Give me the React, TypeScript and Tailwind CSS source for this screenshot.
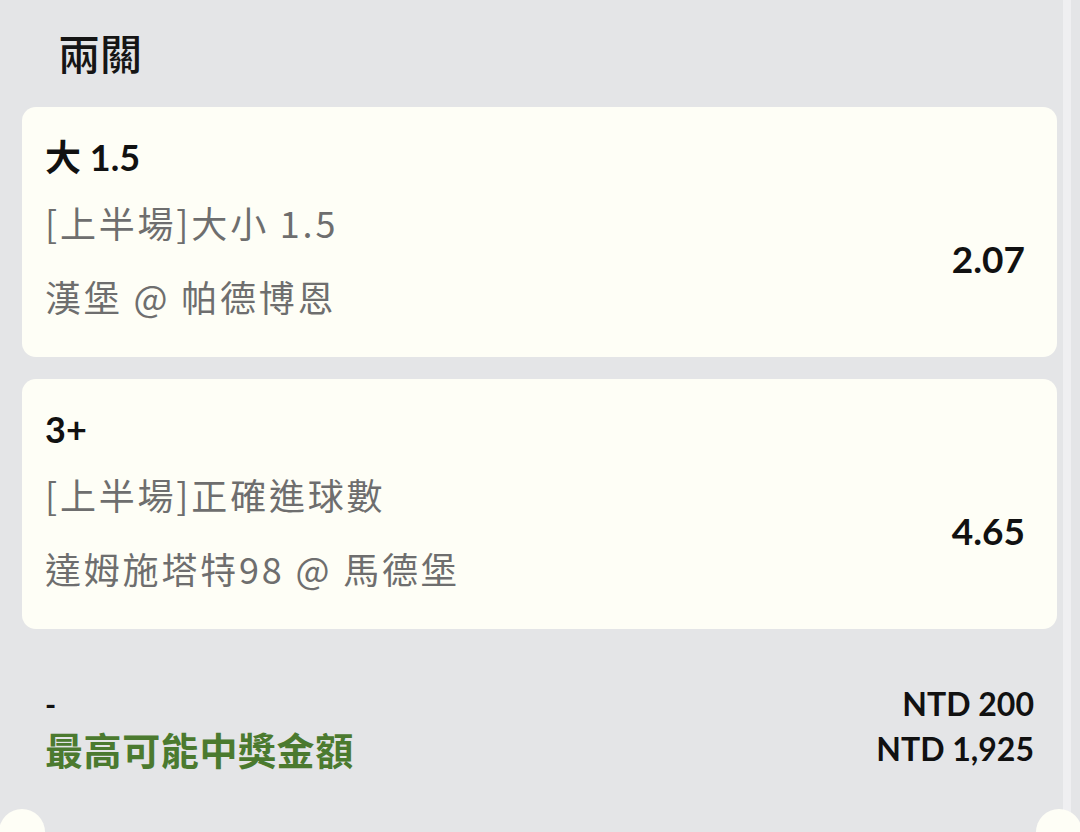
import React from "react";

type Leg = {
  pick: string;
  market: string;
  match: string;
  odds: string;
};

const legs: Leg[] = [
  { pick: "大 1.5", market: "[上半場]大小 1.5", match: "漢堡 @ 帕德博恩", odds: "2.07" },
  { pick: "3+", market: "[上半場]正確進球數", match: "達姆施塔特98 @ 馬德堡", odds: "4.65" },
];

const lato = "font-['Lato','Noto_Sans_CJK_TC',sans-serif]";
const cjk = "font-['Noto_Sans_CJK_TC','Noto_Sans',sans-serif]";

function LegCard({ leg }: { leg: Leg }) {
  return (
    <div className="rounded-[14px] bg-[#fefef6] pl-[23px] pr-[32px] pt-[30px] pb-[39px]">
      <div className={`${lato} text-[36px] leading-[40px] font-bold text-[#111]`}>{leg.pick}</div>
      <div className="mt-[23px] flex items-center justify-between">
        <div className={`${cjk} text-[36px] tracking-[2.8px] text-[#6e6e6e]`}>
          <div className="leading-[44px]">{leg.market}</div>
          <div className="mt-[30px] leading-[44px]">{leg.match}</div>
        </div>
        <div className={`${lato} text-[37px] font-bold text-[#111]`}>{leg.odds}</div>
      </div>
    </div>
  );
}

export default function App() {
  return (
    <div className="relative flex h-[832px] w-[1080px] overflow-hidden bg-[#e4e5e7]">
      <div className="w-[1063px] shrink-0">
        <div className={`${cjk} pl-[58px] pt-[26px] text-[42px] font-medium leading-[52px] text-[#151515]`}>兩關</div>
        <div className="mt-[29px] flex flex-col gap-[22px] pl-[22px] pr-[6px]">
          {legs.map((leg) => (
            <LegCard key={leg.odds} leg={leg} />
          ))}
        </div>
        <div className="mt-[54px] pl-[45px] pr-[29px]">
          <div className="flex items-center justify-between">
            <span className={`${lato} text-[30px] font-bold leading-[42px] text-[#111]`}>-</span>
            <span className={`${lato} text-[32px] font-bold leading-[42px] text-[#111]`}>NTD 200</span>
          </div>
          <div className="mt-[2px] flex items-center justify-between">
            <span className={`${cjk} text-[38px] font-bold tracking-[0.6px] leading-[44px] text-[#4b7a2f]`}>最高可能中獎金額</span>
            <span className={`${lato} text-[32px] font-bold leading-[44px] text-[#111]`}>NTD 1,925</span>
          </div>
        </div>
      </div>
      <div className="w-[8px] shrink-0 bg-[#efeff1]" />
      <div className="flex-1" />

      {/* ticket notches peeking in at the bottom */}
      <div className="absolute left-[0px] top-[809px] h-[46px] w-[46px] -translate-x-[1px] rounded-full bg-[#fefef6]" />
      <div className="absolute left-[1036px] top-[809px] h-[46px] w-[46px] rounded-full bg-[#fefef6]" />
    </div>
  );
}
